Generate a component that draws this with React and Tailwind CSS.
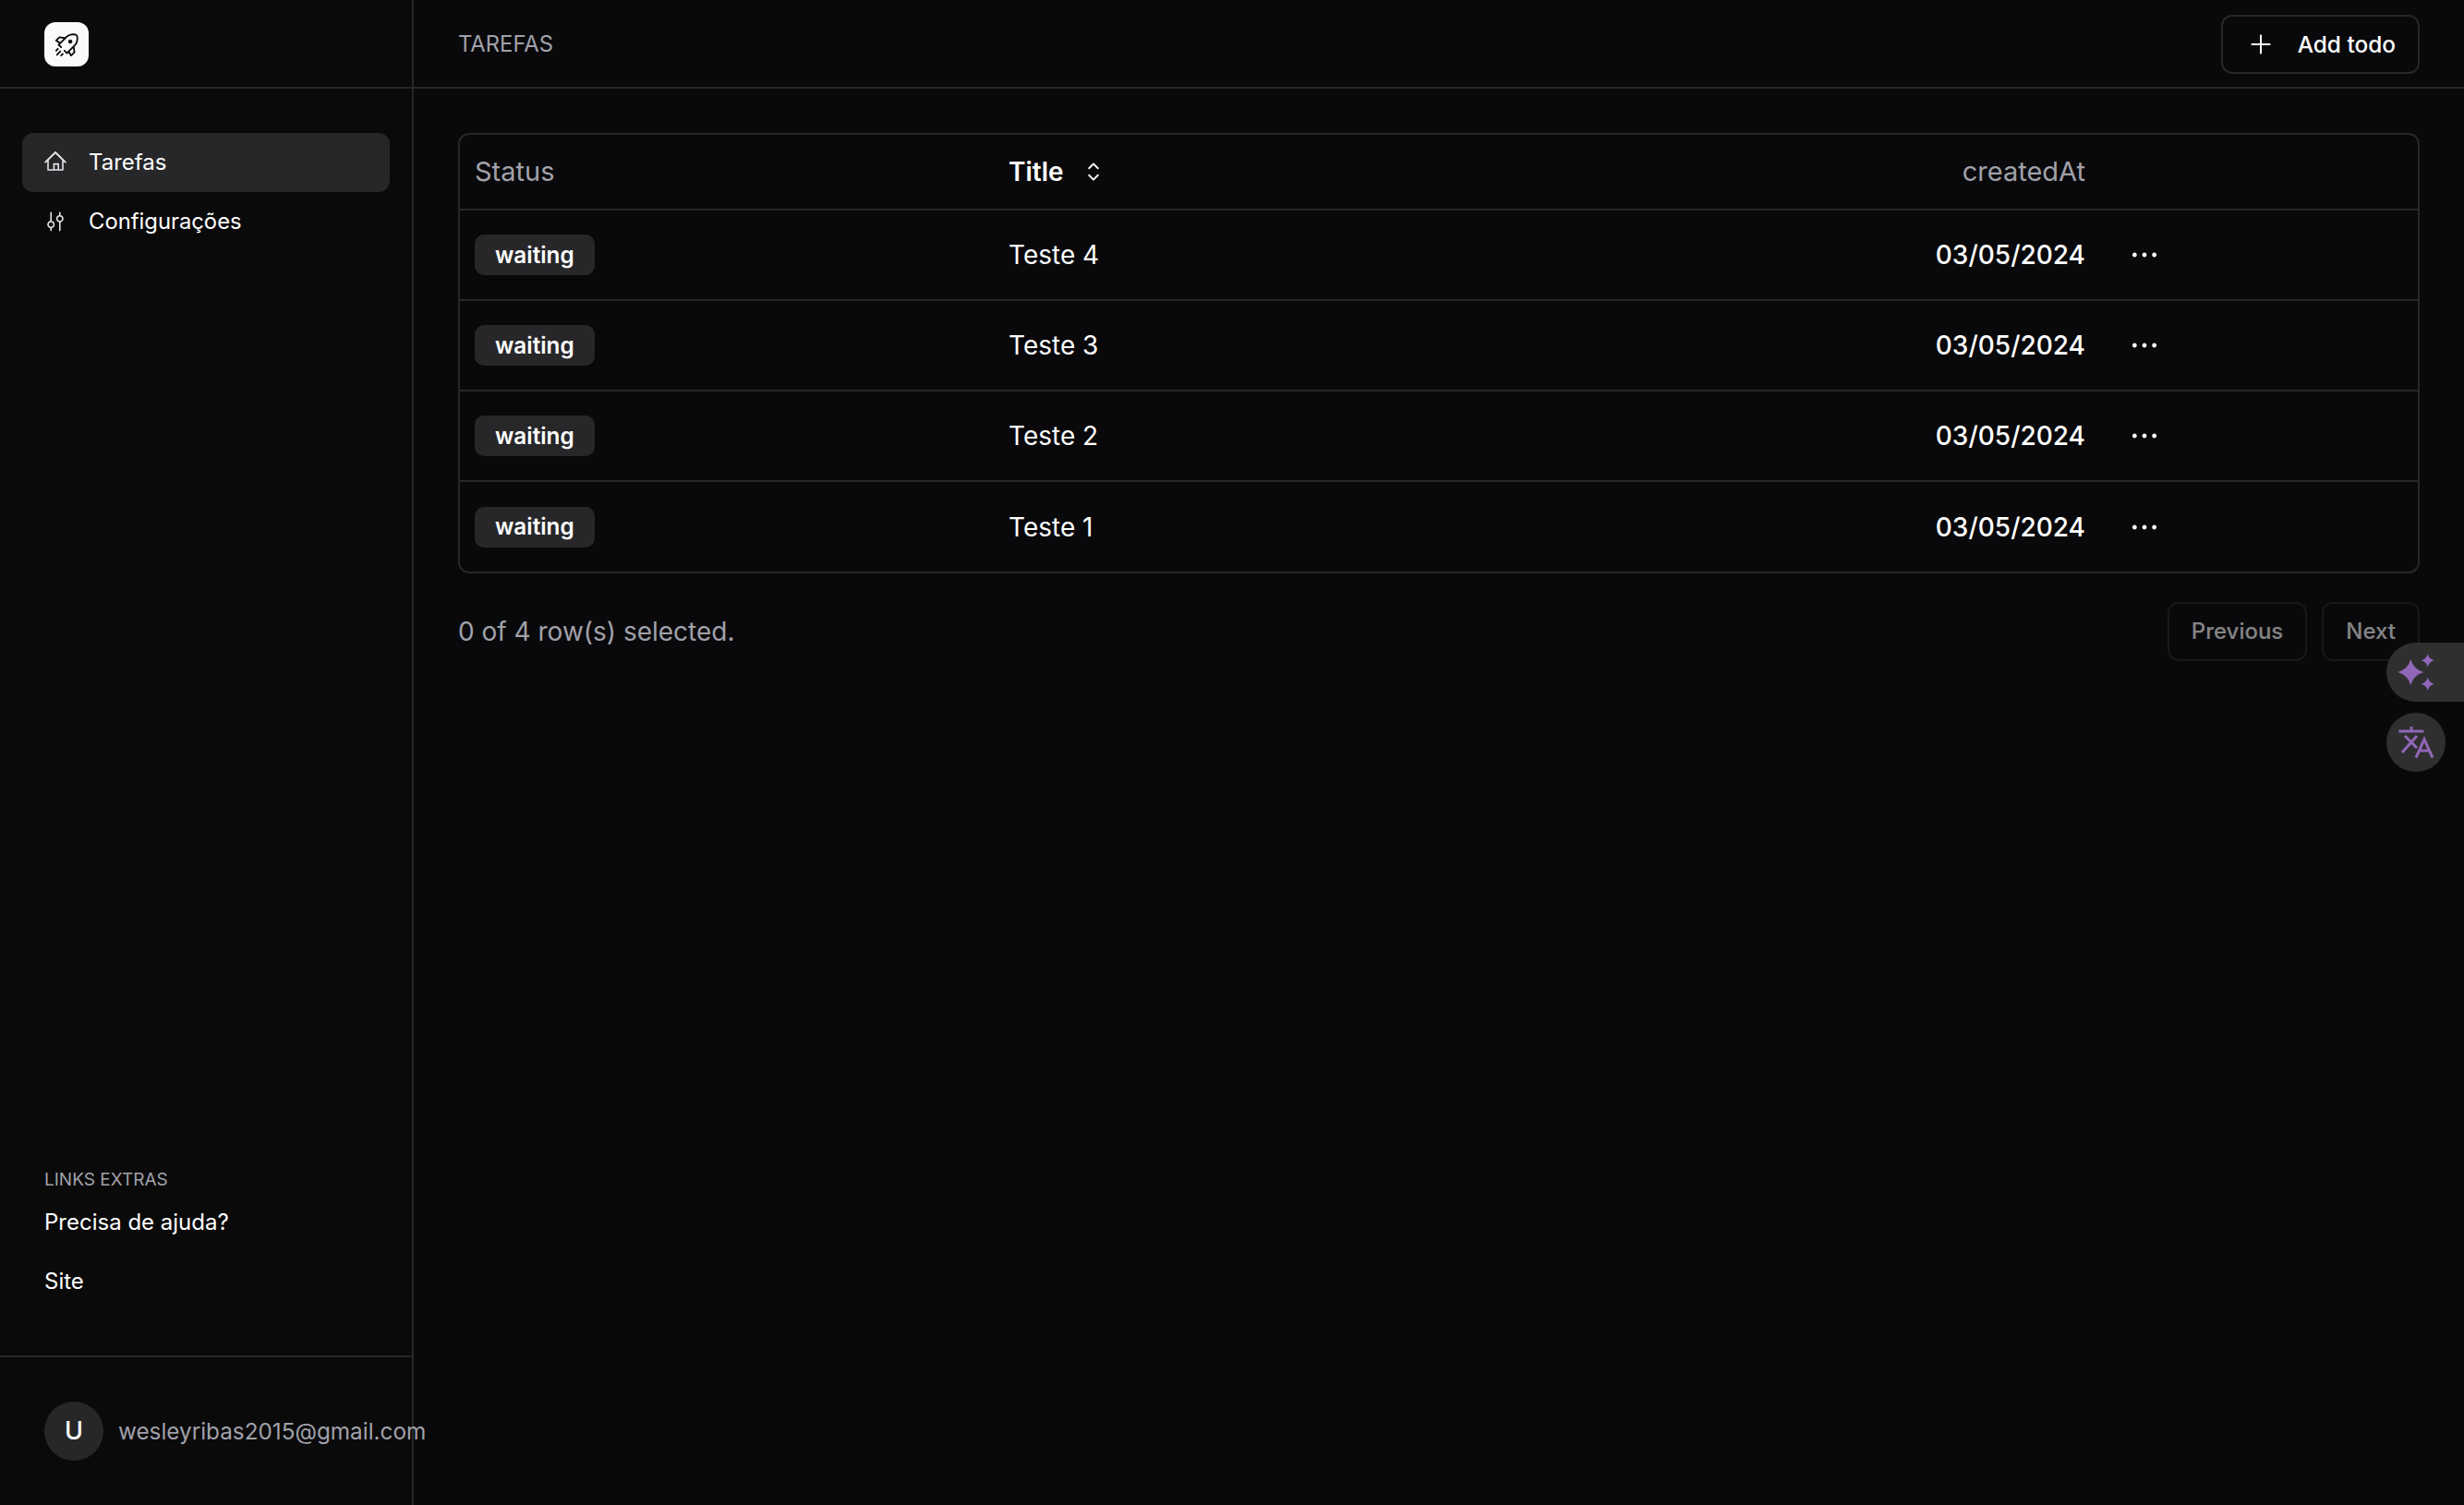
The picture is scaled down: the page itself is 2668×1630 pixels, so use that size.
import { RxRocket, RxHome, RxMixerVertical, RxPlus, RxCaretSort, RxDotsHorizontal } from "react-icons/rx";

const ROWS = ["Teste 4", "Teste 3", "Teste 2", "Teste 1"];

function Star({ cx, cy, r }) {
  const k = r * 0.22;
  return (
    <path
      d={`M${cx} ${cy - r}Q${cx + k} ${cy - k} ${cx + r} ${cy}Q${cx + k} ${cy + k} ${cx} ${cy + r}Q${cx - k} ${cy + k} ${cx - r} ${cy}Q${cx - k} ${cy - k} ${cx} ${cy - r}Z`}
    />
  );
}

export default function App() {
  return (
    <div className="relative flex h-[1630px] w-full overflow-hidden bg-[#09090b] font-['Inter',sans-serif] text-white">
      <aside className="flex w-[448px] shrink-0 flex-col border-r-2 border-[#27272a] bg-[#0a0a0a]">
        <div className="flex h-[96px] items-center border-b-2 border-[#27272a] px-[48px] pt-[2px]">
          <div className="flex h-[48px] w-[48px] items-center justify-center rounded-[12px] bg-[#fafafa] text-[#09090b]">
            <RxRocket size={27} />
          </div>
        </div>

        <nav className="flex flex-1 flex-col pl-[24px] pr-[24px] pt-[48px] text-[24px]">
          <a className="flex h-[64px] items-center gap-[24px] rounded-[12px] bg-[#27272a] px-[24px]">
            <RxHome size={24} className="text-[#e4e4e7]" />
            Tarefas
          </a>
          <a className="flex h-[64px] items-center gap-[24px] px-[24px]">
            <RxMixerVertical size={24} className="text-[#e4e4e7]" />
            <span className="text-[23.8px]">Configurações</span>
          </a>
        </nav>

        <div className="flex flex-col px-[48px] pb-[48px]">
          <p className="flex h-[27px] items-center text-[19px] uppercase text-[#a1a1aa]">Links extras</p>
          <a className="flex h-[64px] items-center text-[24px]">Precisa de ajuda?</a>
          <a className="flex h-[64px] items-center text-[24px]">Site</a>
        </div>

        <div className="flex items-center gap-[16px] border-t-2 border-[#27272a] px-[48px] py-[48px]">
          <div className="flex h-[64px] w-[64px] shrink-0 items-center justify-center rounded-full bg-[#27272a] text-[27px] font-medium">
            U
          </div>
          <span className="whitespace-nowrap text-[24.3px] text-[#a1a1aa]">wesleyribas2015@gmail.com</span>
        </div>
      </aside>

      <main className="flex min-w-0 flex-1 flex-col">
        <header className="flex h-[96px] items-center justify-between border-b-2 border-[#27272a] pl-[48px] pr-[48px] pt-[2px]">
          <span className="text-[23.8px] uppercase text-[#a1a1aa]">Tarefas</span>
          <button className="flex h-[64px] items-center gap-[25px] rounded-[12px] border-2 border-[#27272a] pl-[26px] pr-[24px] text-[24.4px] font-medium">
            <RxPlus size={30} />
            Add todo
          </button>
        </header>

        <div className="flex flex-col px-[48px] pt-[48px]">
          <div className="overflow-hidden rounded-[12px] border-2 border-[#27272a]">
            <table className="w-full table-fixed border-collapse text-[28px]">
              <thead>
                <tr className="h-[81px] border-b-2 border-[#27272a]">
                  <th className="w-[577px] pl-[16px] pr-[17px] text-left text-[29px] font-normal text-[#a1a1aa]">Status</th>
                  <th className="w-[700px] px-[17px] text-left text-[28px] font-semibold">
                    <span className="flex items-center gap-[16px]">
                      Title
                      <RxCaretSort size={32} />
                    </span>
                  </th>
                  <th className="w-[500px] px-[17px] text-right text-[29px] font-normal text-[#a1a1aa]">createdAt</th>
                  <th />
                </tr>
              </thead>
              <tbody>
                {ROWS.map((title, i) => (
                  <tr key={title} className={`h-[98px] ${i < ROWS.length - 1 ? "border-b-2 border-[#27272a]" : ""}`}>
                    <td className="pl-[16px] pr-[17px]">
                      <span className="inline-flex h-[44px] items-center rounded-[10px] bg-[#27272a] px-[22px] text-[24.3px] font-semibold">
                        waiting
                      </span>
                    </td>
                    <td className="px-[17px]">{title}</td>
                    <td className="px-[17px] text-right font-medium">03/05/2024</td>
                    <td className="px-[17px]">
                      <button className="ml-[3px] flex h-[54px] w-[54px] items-center justify-center">
                        <RxDotsHorizontal size={32} />
                      </button>
                    </td>
                  </tr>
                ))}
              </tbody>
            </table>
          </div>

          <div className="flex items-center justify-between pt-[31px]">
            <span className="text-[28px] text-[#a1a1aa]">0 of 4 row(s) selected.</span>
            <div className="flex gap-[16px] opacity-50">
              <button className="flex h-[64px] items-center rounded-[12px] border-2 border-[#27272a] px-[24px] text-[24px] font-medium">
                Previous
              </button>
              <button className="flex h-[64px] items-center rounded-[12px] border-2 border-[#27272a] px-[24px] text-[24px] font-medium">
                Next
              </button>
            </div>
          </div>
        </div>
      </main>

      <div className="absolute right-0 top-[696px] flex h-[64px] w-[84px] items-center rounded-l-full bg-[#2f2f2f]">
        <svg width="64" height="64" viewBox="0 0 64 64" fill="#9067b8">
          <Star cx={26.3} cy={32} r={14} />
          <Star cx={44.7} cy={19.3} r={7} />
          <Star cx={44.7} cy={44.7} r={7} />
        </svg>
      </div>
      <div className="absolute left-[2584px] top-[772px] h-[64px] w-[64px] rounded-full bg-[#2f2f2f]">
        <svg width="64" height="64" viewBox="0 0 64 64" fill="none" stroke="#9067b8" strokeWidth="3">
          <path d="M13.3 20H40.3M27 15V20M20 25L33 38M33 25L17 43M32 48.7L41 28.7L50 48.7M35 41H47" />
        </svg>
      </div>
    </div>
  );
}
